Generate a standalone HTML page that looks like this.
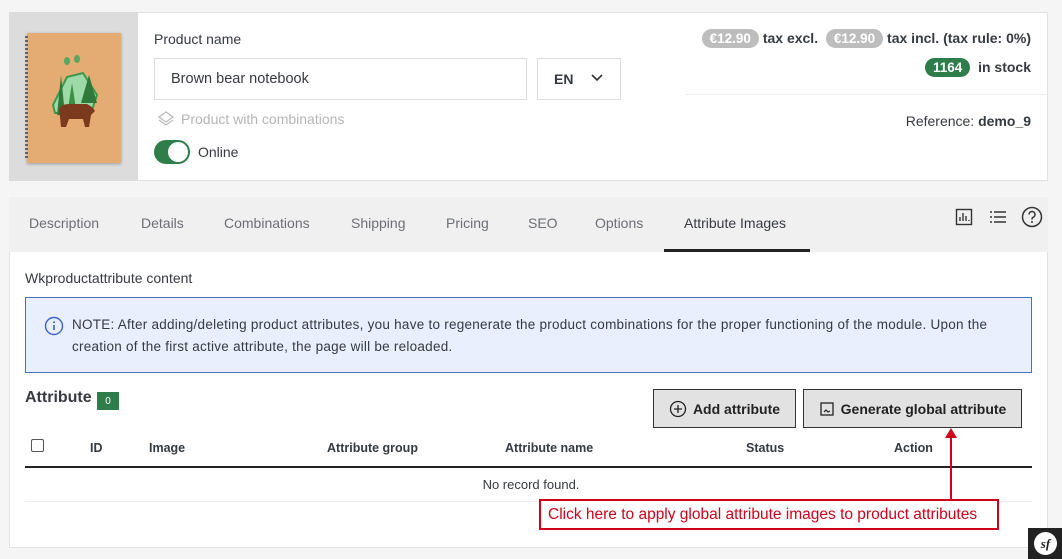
<!DOCTYPE html>
<html><head><meta charset="utf-8"><style>
*{box-sizing:border-box;margin:0;padding:0}
body{width:1062px;height:559px;background:#f5f5f5;font-family:"Liberation Sans",sans-serif;color:#363a41;position:relative;overflow:hidden;font-size:14px}
.a{position:absolute}
.card{left:9px;top:12px;width:1039px;height:169px;background:#fff;border:1px solid #e2e2e2}
.img{left:9px;top:12px;width:129px;height:169px;background:#dcdcdc}
.pill{display:inline-block;background:#bdbdbd;color:#fff;border-radius:11px;padding:2px 8px;font-weight:bold;font-size:13.5px}
.tabs{left:9px;top:197px;width:1039px;height:56px;background:#f0f0f0}
.tab{position:absolute;top:18px;font-size:14px;color:#6c6f75}
.panel{left:9px;top:252px;width:1039px;height:296px;background:#fff;border:1px solid #e2e2e2;border-top:none}
.th{position:absolute;top:441px;font-weight:bold;font-size:12.5px;color:#363a41}
.btn{position:absolute;top:389px;height:39px;background:#e2e2e2;border:1px solid #333;font-size:14px;color:#222;display:flex;align-items:center;justify-content:center;gap:6px}
</style></head><body>
<div class="a card"></div>
<div class="a img"></div>
<div class="a" style="left:27px;top:33px;width:94px;height:130px;background:#e4ac72;box-shadow:0 1px 3px rgba(0,0,0,.3)"></div>
<div class="a" style="left:25px;top:36px;width:3px;height:123px;background:repeating-linear-gradient(#666 0 2px,transparent 2px 4px)"></div>
<svg class="a" style="left:45px;top:55px" width="60" height="80" viewBox="0 0 60 80">
<polygon points="8,50 22,22 38,18 52,40 46,58 10,58" fill="#9ed9a8" stroke="#3a9a4a" stroke-width="2"/>
<polygon points="12,60 16,20 20,60" fill="#2f7a3a"/><polygon points="22,60 27,28 32,60" fill="#3a8f44"/>
<polygon points="36,48 44,20 52,48" fill="#2f7a3a"/>
<path d="M14,54 Q16,49 24,49 L42,49 Q48,52 50,56 L46,60 L44,72 L40,72 L38,64 L24,64 L21,72 L16,72 L15,62 Z" fill="#7b3a1e"/>
<ellipse cx="22" cy="6" rx="3" ry="4" fill="#5aa65f"/><ellipse cx="32" cy="4" rx="3" ry="4" fill="#5aa65f"/>
</svg>
<div class="a" style="left:154px;top:31px;font-size:14px">Product name</div>
<div class="a" style="left:154px;top:58px;width:373px;height:42px;border:1px solid #ddd;padding:12px 16px;font-size:14.5px">Brown bear notebook</div>
<div class="a" style="left:537px;top:58px;width:84px;height:42px;border:1px solid #ddd;padding:12px 16px;font-size:14px;font-weight:bold">EN</div>
<svg class="a" style="left:591px;top:73px" width="12" height="10"><path d="M1,2 L6,7 L11,2" stroke="#333" stroke-width="1.6" fill="none"/></svg>
<svg class="a" style="left:157px;top:110px" width="18" height="18" viewBox="0 0 18 18"><path d="M9,2 L16,7 L9,12 L2,7Z M2,10 L9,15 L16,10" stroke="#bbb" stroke-width="1.3" fill="none"/></svg>
<div class="a" style="left:181px;top:111px;color:#b5b5b5;font-size:14px">Product with combinations</div>
<div class="a" style="left:154px;top:140px;width:36px;height:24px;border-radius:12px;background:#2e7d4a"></div>
<div class="a" style="left:168px;top:142px;width:20px;height:20px;border-radius:50%;background:#fff"></div>
<div class="a" style="left:198px;top:144px;font-size:14px">Online</div>
<div class="a" style="right:31px;top:29px;font-weight:bold;font-size:14px;white-space:nowrap"><span class="pill">€12.90</span> tax excl. &nbsp;<span class="pill">€12.90</span> tax incl. (tax rule: 0%)</div>
<div class="a" style="right:31px;top:58px;font-weight:bold;font-size:14px"><span class="pill" style="background:#2e7d4a">1164</span> &nbsp;in stock</div>
<div class="a" style="left:685px;top:94px;width:362px;height:1px;background:#eee"></div>
<div class="a" style="right:31px;top:113px;font-size:14px">Reference: <b>demo_9</b></div>

<div class="a tabs"></div>
<div class="tab" style="left:29px;top:215px">Description</div>
<div class="tab" style="left:141px;top:215px">Details</div>
<div class="tab" style="left:224px;top:215px">Combinations</div>
<div class="tab" style="left:351px;top:215px">Shipping</div>
<div class="tab" style="left:446px;top:215px">Pricing</div>
<div class="tab" style="left:528px;top:215px">SEO</div>
<div class="tab" style="left:595px;top:215px">Options</div>
<div class="tab" style="left:684px;top:215px;color:#363a41">Attribute Images</div>
<div class="a" style="left:664px;top:249px;width:146px;height:3px;background:#222"></div>
<svg class="a" style="left:955px;top:208px" width="18" height="18" viewBox="0 0 18 18"><rect x="1.5" y="1.5" width="15" height="15" fill="none" stroke="#333" stroke-width="1.4"/><path d="M5,13V9M8,13V5M11,13V8M14,13V12" stroke="#333" stroke-width="1.4"/></svg>
<svg class="a" style="left:989px;top:209px" width="18" height="16"><path d="M1,3h2M1,8h2M1,13h2M5,3h12M5,8h12M5,13h12" stroke="#333" stroke-width="1.5"/></svg>
<svg class="a" style="left:1021px;top:206px" width="22" height="22" viewBox="0 0 22 22"><circle cx="11" cy="11" r="9.5" fill="none" stroke="#333" stroke-width="1.5"/><path d="M8,8.5a3,3 0 1 1 4,2.8c-1,.5-1,1-1,2.2" fill="none" stroke="#333" stroke-width="1.5"/><circle cx="11" cy="16" r="1" fill="#333"/></svg>

<div class="a panel"></div>
<div class="a" style="left:25px;top:270px;font-size:14px">Wkproductattribute content</div>
<div class="a" style="left:25px;top:297px;width:1007px;height:76px;background:#e9effc;border:1px solid #4a6fc0"></div>
<svg class="a" style="left:44px;top:316px" width="20" height="20" viewBox="0 0 20 20"><circle cx="10" cy="10" r="8.5" fill="none" stroke="#3c64c8" stroke-width="1.4"/><path d="M10,9v5" stroke="#3c64c8" stroke-width="1.6"/><circle cx="10" cy="6.3" r="1" fill="#3c64c8"/></svg>
<div class="a" style="left:72px;top:314px;width:935px;font-size:13.5px;letter-spacing:0.25px;line-height:22px;color:#363a41">NOTE: After adding/deleting product attributes, you have to regenerate the product combinations for the proper functioning of the module. Upon the creation of the first active attribute, the page will be reloaded.</div>
<div class="a" style="left:25px;top:389px;font-weight:bold;font-size:16px">Attribute</div>
<div class="a" style="left:97px;top:392px;width:22px;height:18px;background:#2e7d4a;color:#fff;font-size:10px;display:flex;align-items:center;justify-content:center">0</div>
<div class="btn" style="left:653px;width:143px"><svg width="18" height="18" viewBox="0 0 18 18"><circle cx="9" cy="9" r="7.5" fill="none" stroke="#222" stroke-width="1.3"/><path d="M9,5v8M5,9h8" stroke="#222" stroke-width="1.3"/></svg><b>Add attribute</b></div>
<div class="btn" style="left:803px;width:219px"><svg width="16" height="16" viewBox="0 0 16 16"><rect x="2" y="2" width="12" height="12" fill="none" stroke="#222" stroke-width="1.3"/><path d="M5,11l2-2 2,2 2-1" stroke="#222" stroke-width="1.2" fill="none"/></svg><b>Generate global attribute</b></div>
<div class="a" style="left:31px;top:439px;width:13px;height:13px;border:1.3px solid #555;border-radius:2px"></div>
<div class="th" style="left:90px">ID</div>
<div class="th" style="left:149px">Image</div>
<div class="th" style="left:327px">Attribute group</div>
<div class="th" style="left:505px">Attribute name</div>
<div class="th" style="left:746px">Status</div>
<div class="th" style="left:894px">Action</div>
<div class="a" style="left:25px;top:466px;width:1007px;height:2px;background:#222"></div>
<div class="a" style="left:0;width:1062px;top:477px;text-align:center;font-size:13px">No record found.</div>
<div class="a" style="left:25px;top:501px;width:1007px;height:1px;background:#eee"></div>
<div class="a" style="left:950px;top:434px;width:2px;height:66px;background:#d0021b"></div>
<svg class="a" style="left:945px;top:428px" width="12" height="10"><polygon points="6,0 12,10 0,10" fill="#d0021b"/></svg>
<div class="a" style="left:539px;top:499px;width:460px;height:31px;border:2px solid #d0021b;background:#fff;color:#d0021b;font-size:15.5px;line-height:27px;padding-left:7px;white-space:nowrap">Click here to apply global attribute images to product attributes</div>
<div class="a" style="left:1028px;top:528px;width:34px;height:31px;background:#222"></div>
<div class="a" style="left:1034px;top:532px;width:23px;height:23px;border-radius:50%;background:#fff;color:#222;font-family:'Liberation Serif',serif;font-style:italic;font-weight:bold;font-size:13px;text-align:center;line-height:23px">sf</div>
</body></html>
